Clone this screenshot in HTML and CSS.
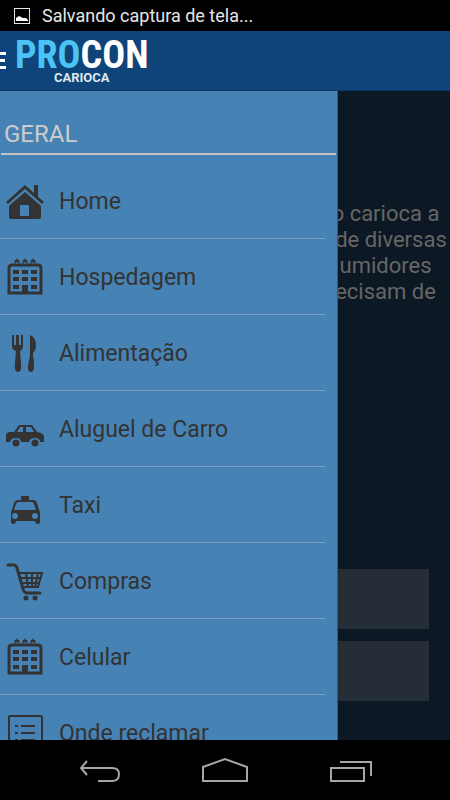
FILE: index.html
```html
<!DOCTYPE html>
<html lang="pt-BR">
<head>
    <meta charset="UTF-8">
    <meta name="viewport" content="width=device-width, initial-scale=1.0">
    <title>PROCON Carioca</title>
    <link rel="stylesheet" href="styles.css">
</head>
<body>
    <!-- Barra de status -->
    <div class="status">
        <svg width="16" height="16" viewBox="0 0 16 16">
            <rect x="0.5" y="0.5" width="15" height="15" fill="none" stroke="#e6e6e6"/>
            <path d="M2 13V10L5 8L7 9L9 10H12L14 12V13Z" fill="#fff"/>
        </svg>
        <span>Salvando captura de tela...</span>
    </div>

    <!-- Cabeçalho -->
    <header class="topbar">
        <button class="menu-button" aria-label="Menu">
            <svg width="6" height="20" viewBox="0 0 6 20" fill="#fff">
                <path d="M0 1H6V4H0ZM0 8H5V11H0ZM0 15H6V18H0Z"/>
            </svg>
        </button>
        <div class="logo">
            <div class="logo-name"><span>PRO</span>CON</div>
            <div class="logo-city">CARIOCA</div>
        </div>
    </header>

    <main class="screen">
        <!-- Conteúdo atrás do menu -->
        <div class="content">
            <p>o carioca a<br>&nbsp;&nbsp;de diversas<br>umidores<br>ecisam de</p>
            <div class="actions">
                <button aria-label="Opção 1"></button>
                <button aria-label="Opção 2"></button>
            </div>
        </div>

        <!-- Menu lateral -->
        <nav class="drawer">
            <h2>GERAL</h2>
            <ul>
                <li><a href="#">
                    <svg viewBox="0 0 40 40">
                        <path class="line" d="M2 21L20 5L38 21" stroke-width="3"/>
                        <path d="M29 3H33V17L29 13Z"/>
                        <path fill-rule="evenodd" d="M20 10L36 24V35Q36 37 34 37H6Q4 37 4 35V24ZM15 23V34H24V23Z"/>
                    </svg>
                    <span>Home</span>
                </a></li>
                <li><a href="#">
                    <svg viewBox="0 0 40 40">
                        <g id="hotel">
                            <path d="M12 0L13 2H15L14 3L15 6L12 4L9 6L10 3L9 2H11ZM20 0L21 2H23L22 3L23 6L20 4L17 6L18 3L17 2H19ZM28 0L29 2H31L30 3L31 6L28 4L25 6L26 3L25 2H27Z"/>
                            <path class="line" d="M4 35V10Q4 7 7 7H33Q36 7 36 10V35Z" stroke-width="3"/>
                            <path d="M8 12H14V16H8ZM17 12H23V16H17ZM26 12H32V16H26ZM8 19H14V23H8ZM17 19H23V23H17ZM26 19H32V23H26ZM8 27H14V31H8ZM26 27H32V31H26ZM17 27H23V36H17Z"/>
                        </g>
                    </svg>
                    <span>Hospedagem</span>
                </a></li>
                <li><a href="#">
                    <svg viewBox="0 0 40 40">
                        <path d="M7 1H9V11H11V1H14V11H16V1H18V12Q18 16 15 17L16 29Q17 38 13 38Q9 38 10 29L11 17Q7 16 7 12Z"/>
                        <path d="M25 1Q31 3 31 12Q31 16 28 19V22Q29 24 29 32Q29 38 26 38Q22 38 23 31L25 22Z"/>
                    </svg>
                    <span>Alimentação</span>
                </a></li>
                <li><a href="#">
                    <svg viewBox="0 0 40 40">
                        <path fill-rule="evenodd" d="M1 25Q1 23 4 22L9 22L14 15H27L32 22Q39 23 39 27V32H35Q35 28 30 28Q25 28 24 32H16Q16 28 11 28Q6 28 5 32H1ZM15 17L12 22H18V17ZM21 17V22H29L26 17Z"/>
                        <circle cx="11" cy="33" r="3.5"/>
                        <circle cx="30" cy="33" r="3.5"/>
                    </svg>
                    <span>Aluguel de Carro</span>
                </a></li>
                <li><a href="#">
                    <svg viewBox="0 0 40 40">
                        <path fill-rule="evenodd" d="M16 10H24V14H28Q31 14 32 17L34 24Q35 25 35 27V36Q35 38 33 38Q30 38 30 35H11Q11 38 8 38Q6 38 6 36V27Q6 25 7 24L9 17Q10 14 13 14H16ZM13 16Q12 16 11 18L9 24H31L29 18Q28 16 27 16ZM10 27A3 3 0 1 0 10 33A3 3 0 1 0 10 27ZM30 27A3 3 0 1 0 30 33A3 3 0 1 0 30 27Z"/>
                    </svg>
                    <span>Taxi</span>
                </a></li>
                <li><a href="#">
                    <svg viewBox="0 0 40 40">
                        <path class="line" d="M3 3H9Q11 3 12 6L18 27Q19 31 22 31H35" stroke-width="3" stroke-linecap="round"/>
                        <path class="line" d="M13 11H37L33 25H18M15 16H36M16 21H35M21 11L23 25M27 11V25M33 11L30 25" stroke-width="2"/>
                        <circle cx="21" cy="36" r="2.5"/>
                        <circle cx="30" cy="36" r="2.5"/>
                    </svg>
                    <span>Compras</span>
                </a></li>
                <li><a href="#">
                    <svg viewBox="0 0 40 40"><use href="#hotel"/></svg>
                    <span>Celular</span>
                </a></li>
                <li><a href="#">
                    <svg viewBox="0 0 40 40">
                        <rect class="line" x="4" y="2" width="33" height="36" rx="1" stroke-width="2"/>
                        <path d="M10 11H13V13H10ZM16 11H30V13H16ZM10 18H13V20H10ZM16 18H30V20H16ZM10 25H13V27H10ZM16 25H30V27H16Z"/>
                    </svg>
                    <span>Onde reclamar</span>
                </a></li>
            </ul>
        </nav>
    </main>

    <!-- Botões do sistema -->
    <footer class="system">
        <button aria-label="Voltar">
            <svg width="44" height="28" viewBox="0 0 44 28">
                <path d="M10 5L4 12L10 19M4 12H35Q42 12 42 18Q42 25 35 25H21" />
            </svg>
        </button>
        <button aria-label="Início">
            <svg width="48" height="28" viewBox="0 0 48 28">
                <path d="M2 25V11L24 3L46 11V25Z"/>
            </svg>
        </button>
        <button aria-label="Recentes">
            <svg width="44" height="28" viewBox="0 0 44 28">
                <path d="M2 12H35V25H2ZM11 6H42V20"/>
            </svg>
        </button>
    </footer>
</body>
</html>
```
FILE: styles.css
```css
* {
    box-sizing: border-box;
}

body {
    margin: 0;
    height: 100vh;
    display: flex;
    flex-direction: column;
    overflow: hidden;
    background-color: #000;
    font-family: Roboto, "Liberation Sans", sans-serif;
}

button {
    padding: 0;
    border: none;
    background: none;
    cursor: pointer;
}

svg {
    display: block;
    flex-shrink: 0;
}

/* Barra de status */
.status {
    height: 31px;
    display: flex;
    align-items: center;
    gap: 12px;
    padding-left: 14px;
    color: #e6e6e6;
    font-size: 18px;
}

/* Cabeçalho */
.topbar {
    height: 60px;
    display: flex;
    align-items: center;
    gap: 9px;
    background-color: #0e4479;
    border-bottom: 1px solid #0b3764;
}

.logo {
    padding-top: 2px;
    text-align: center;
    color: #fff;
}

.logo-name {
    font-family: "Liberation Sans Narrow", "Roboto Condensed", Roboto, sans-serif;
    font-size: 38px;
    font-weight: bold;
    line-height: 32px;
}

.logo-name span {
    color: #4bc3f5;
}

.logo-city {
    font-size: 13px;
    font-weight: bold;
    line-height: 13px;
    color: #dfe8f0;
}

/* Conteúdo */
.screen {
    flex: 1;
    min-height: 0;
    position: relative;
    overflow: hidden;
    background-color: #0c1924;
}

.content {
    height: 100%;
    display: flex;
    flex-direction: column;
    justify-content: space-between;
    padding: 110px 0 39px 321px;
}

.content p {
    margin: 0;
    color: #666;
    font-size: 22px;
    line-height: 26px;
    text-align: center;
    white-space: nowrap;
}

.actions {
    display: flex;
    flex-direction: column;
    gap: 12px;
    padding-right: 21px;
}

.actions button {
    height: 60px;
    background-color: #252d36;
}

/* Menu lateral */
.drawer {
    position: absolute;
    top: 0;
    bottom: 0;
    left: 0;
    width: 75%;
    overflow: hidden;
    background-color: #4682b4;
    border-right: 1px solid #2c5c88;
}

.drawer h2 {
    margin: 0 1px;
    padding: 29px 3px 4px;
    border-bottom: 2px solid #c4c4c4;
    color: #ccc;
    font-size: 24px;
    font-weight: normal;
    line-height: 29px;
}

.drawer ul {
    list-style: none;
    margin: 8px 12px 0 0;
    padding: 0;
}

.drawer li {
    border-bottom: 1px solid #7a9fc0;
}

.drawer a {
    height: 75px;
    display: flex;
    align-items: center;
    gap: 14px;
    padding: 2px 0 0 5px;
    color: #333;
    font-size: 23px;
    text-decoration: none;
}

.drawer svg {
    width: 40px;
    height: 40px;
    fill: #333;
}

.drawer .line {
    fill: none;
    stroke: #333;
}

/* Botões do sistema */
.system {
    height: 60px;
    display: flex;
    justify-content: center;
    align-items: center;
    gap: 80px;
}

.system path {
    fill: none;
    stroke: #a6a6a6;
    stroke-width: 2;
}
```
